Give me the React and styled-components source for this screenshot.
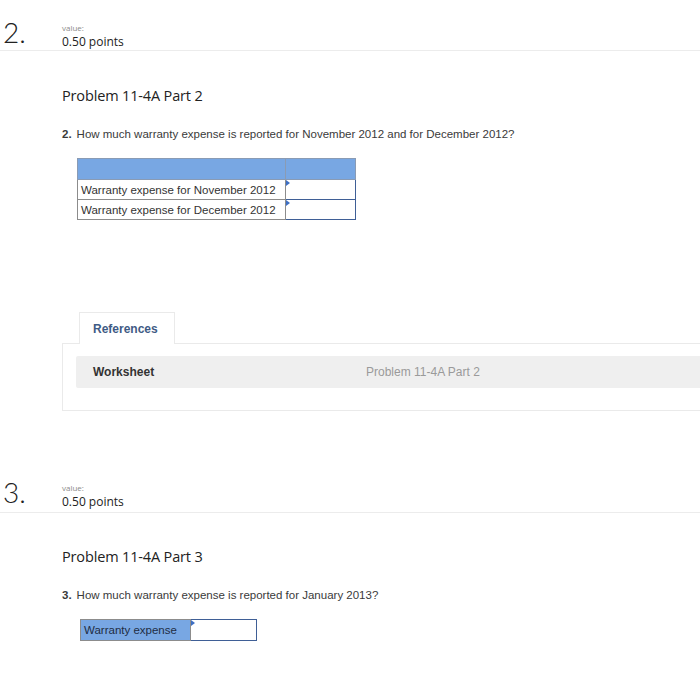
import React from 'react';
import styled, { createGlobalStyle } from 'styled-components';

const GlobalStyle = createGlobalStyle`
  body {
    margin: 0;
    background: #fff;
    overflow: hidden;
    font-family: "Open Sans", "Liberation Sans", sans-serif;
  }
`;

const Page = styled.div`
  width: 700px;
  overflow: hidden;
`;

const Question = styled.section`
  display: flex;
  flex-direction: column;
`;

const QuestionHead = styled.div`
  display: flex;
  align-items: flex-start;
  padding-top: ${(p) => p.top}px;
  height: ${(p) => p.height}px;
  border-bottom: 1px solid #ececec;
  box-sizing: border-box;
`;

const QNumber = styled.div`
  width: 62px;
  padding-left: 3px;
  box-sizing: border-box;
  font-family: "Lato", "Open Sans", sans-serif;
  font-weight: 300;
  font-size: 28px;
  line-height: 27px;
  color: #222;
  margin-top: -3px;
`;

const Worth = styled.div`
  display: flex;
  flex-direction: column;
`;

const WorthLabel = styled.span`
  font-family: "Open Sans", sans-serif;
  font-size: 8px;
  line-height: 10px;
  color: #8a8a8a;
  margin-top: 1px;
`;

const WorthPoints = styled.span`
  font-family: "Open Sans", sans-serif;
  font-weight: 500;
  font-size: 12px;
  line-height: 16px;
  color: #222;
  margin-top: 1px;
`;

const QuestionBody = styled.div`
  padding-left: 62px;
  display: flex;
  flex-direction: column;
  align-items: flex-start;
`;

const ProblemTitle = styled.h2`
  margin: ${(p) => p.top}px 0 0;
  font-family: "Open Sans", sans-serif;
  font-weight: 500;
  font-size: 14.5px;
  line-height: 20px;
  color: #222;
  letter-spacing: -0.15px;
`;

const Prompt = styled.p`
  margin: 21px 0 0;
  font-family: "Liberation Sans", Arial, sans-serif;
  font-size: 11.5px;
  line-height: 14px;
  color: #3a3a3a;
  b {
    margin-right: 5px;
  }
`;

const AnswerTable = styled.table`
  border-collapse: collapse;
  margin: ${(p) => p.top}px 0 0 ${(p) => p.left}px;
  font-family: "Liberation Sans", Arial, sans-serif;
  font-size: 11.5px;
  color: #333;
`;

const HeadCell = styled.th`
  background: #78a7e3;
  border: 1px solid #8a9bb4;
  height: 20px;
  padding: 0;
  width: ${(p) => p.w}px;
`;

const LabelCell = styled.td`
  border: 1px solid #8c8c8c;
  height: ${(p) => p.h}px;
  padding: 0 3px;
  white-space: nowrap;
  background: ${(p) => (p.blue ? '#78a7e3' : '#fff')};
  color: ${(p) => (p.blue ? '#1f2d44' : '#333')};
  width: ${(p) => p.w}px;
  box-sizing: border-box;
`;

const InputCell = styled.td`
  position: relative;
  border: 1.5px solid #3f5f96;
  padding: 0;
  background: #fff;
  width: ${(p) => p.w}px;
  box-sizing: border-box;
`;

const Flag = styled.span`
  position: absolute;
  left: 0;
  top: 0;
  width: 0;
  height: 0;
  border-top: 3px solid transparent;
  border-bottom: 3px solid transparent;
  border-left: 4px solid #3d6fc4;
`;

const RefWrap = styled.div`
  margin: 92px 0 0;
  padding-left: 62px;
  display: flex;
  flex-direction: column;
  align-items: flex-start;
`;

const Tab = styled.div`
  margin-left: 17px;
  width: 96px;
  height: 32px;
  box-sizing: border-box;
  border: 1px solid #eaeaea;
  border-bottom: none;
  background: #fff;
  font-family: "Liberation Sans", Arial, sans-serif;
  font-weight: 700;
  font-size: 12px;
  color: #3f5b85;
  display: flex;
  align-items: center;
  padding-left: 13px;
  position: relative;
  z-index: 1;
  margin-bottom: -1px;
`;

const RefPanel = styled.div`
  width: 700px;
  height: 68px;
  box-sizing: border-box;
  border: 1px solid #eaeaea;
  border-right: none;
  padding: 12px 0 0 13px;
`;

const RefRow = styled.div`
  height: 32px;
  background: #efefef;
  border-radius: 2px;
  display: flex;
  align-items: center;
  padding-left: 17px;
  font-family: "Liberation Sans", Arial, sans-serif;
  font-size: 12px;
`;

const RefName = styled.span`
  font-weight: 700;
  color: #333;
  width: 273px;
`;

const RefLink = styled.span`
  color: #9a9a9a;
`;

const rows2 = ['Warranty expense for November 2012', 'Warranty expense for December 2012'];

export default function App() {
  return (
    <Page>
      <GlobalStyle />
      <Question>
        <QuestionHead top={22} height={51}>
          <QNumber>2.</QNumber>
          <Worth>
            <WorthLabel>value:</WorthLabel>
            <WorthPoints>0.50 points</WorthPoints>
          </Worth>
        </QuestionHead>
        <QuestionBody>
          <ProblemTitle top={35}>Problem 11-4A Part 2</ProblemTitle>
          <Prompt>
            <b>2.</b>How much warranty expense is reported for November 2012 and for December 2012?
          </Prompt>
          <AnswerTable top={17} left={15}>
            <thead>
              <tr>
                <HeadCell w={207} />
                <HeadCell w={69} />
              </tr>
            </thead>
            <tbody>
              {rows2.map((r) => (
                <tr key={r}>
                  <LabelCell w={207} h={20}>{r}</LabelCell>
                  <InputCell w={69}>
                    <Flag />
                  </InputCell>
                </tr>
              ))}
            </tbody>
          </AnswerTable>
        </QuestionBody>
        <RefWrap>
          <Tab>References</Tab>
          <RefPanel>
            <RefRow>
              <RefName>Worksheet</RefName>
              <RefLink>Problem 11-4A Part 2</RefLink>
            </RefRow>
          </RefPanel>
        </RefWrap>
      </Question>

      <Question>
        <QuestionHead top={71} height={102}>
          <QNumber>3.</QNumber>
          <Worth>
            <WorthLabel>value:</WorthLabel>
            <WorthPoints>0.50 points</WorthPoints>
          </Worth>
        </QuestionHead>
        <QuestionBody>
          <ProblemTitle top={34}>Problem 11-4A Part 3</ProblemTitle>
          <Prompt>
            <b>3.</b>How much warranty expense is reported for January 2013?
          </Prompt>
          <AnswerTable top={17} left={18}>
            <tbody>
              <tr>
                <LabelCell blue w={110} h={21}>Warranty expense</LabelCell>
                <InputCell w={66}>
                  <Flag />
                </InputCell>
              </tr>
            </tbody>
          </AnswerTable>
        </QuestionBody>
      </Question>
    </Page>
  );
}
